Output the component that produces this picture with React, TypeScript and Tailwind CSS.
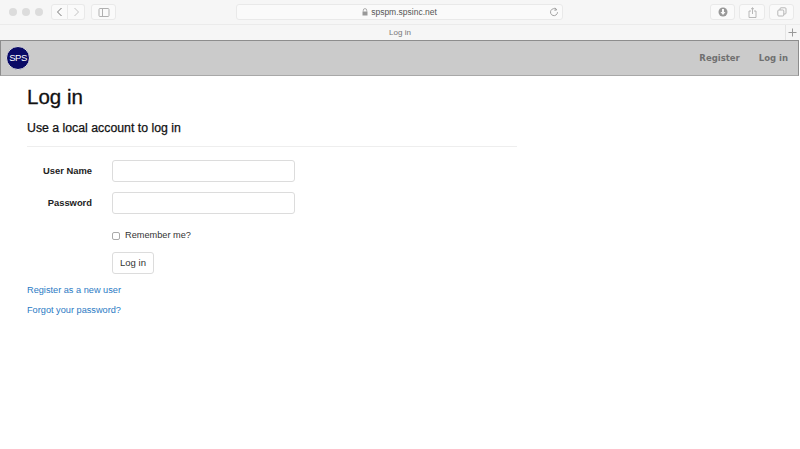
import React from "react";

const Btn = ({ className = "", children }: { className?: string; children?: React.ReactNode }) => (
  <div className={"h-[16px] border border-[#e9e9e9] rounded-[3px] bg-[#fafafa] flex items-center justify-center " + className}>{children}</div>
);

export default function App() {
  return (
    <div className="w-[800px] h-[449px] bg-white overflow-hidden flex flex-col font-['Liberation_Sans',Arial,sans-serif]">
      {/* Browser toolbar */}
      <div className="h-[25px] bg-[#f6f6f6] border-b border-[#ebebeb] flex items-center pl-[9px] pr-[6px] shrink-0">
        <div className="flex gap-[5px] w-[42px]">
          <span className="w-[8px] h-[8px] rounded-full bg-[#dcdcdc]" />
          <span className="w-[8px] h-[8px] rounded-full bg-[#dcdcdc]" />
          <span className="w-[8px] h-[8px] rounded-full bg-[#dcdcdc]" />
        </div>
        <div className="flex">
          <Btn className="w-[17px] rounded-r-none">
            <svg width="7" height="10" viewBox="0 0 7 10" fill="none" stroke="#777" strokeWidth="1"><path d="M5.500 1 1.500 5l4 4" /></svg>
          </Btn>
          <Btn className="w-[17px] rounded-l-none border-l-0">
            <svg width="7" height="10" viewBox="0 0 7 10" fill="none" stroke="#c4c4c4" strokeWidth="1"><path d="M1.500 1l4 4-4 4" /></svg>
          </Btn>
        </div>
        <Btn className="w-[25px] ml-[6px]">
          <svg width="12" height="9" viewBox="0 0 12 9" fill="none" stroke="#b0b0b0" strokeWidth="1"><rect x="1" y="0.5" width="10" height="8" rx="1" /><path d="M4.500 .5v8" /></svg>
        </Btn>
        <div className="w-[327px] h-[16px] ml-[120px] border border-[#e9e9e9] rounded-[3px] bg-[#fafafa] flex items-center relative">
          <div className="flex-1 flex items-center justify-center gap-[3px] text-[8.500px] text-[#555]">
            <svg width="6" height="8" viewBox="0 0 6 8"><path d="M1.300 3.500V2.300a1.700 1.700 0 0 1 3.400 0v1.200" fill="none" stroke="#999" strokeWidth=".8" /><rect x=".5" y="3.500" width="5" height="4" fill="#999" /></svg>
            <span>spspm.spsinc.net</span>
          </div>
          <svg className="absolute right-[3px] top-[2px]" width="10" height="10" viewBox="0 0 10 10" fill="none" stroke="#999" strokeWidth=".9"><path d="M7.600 2.800a3.500 3.500 0 1 0 .9 2.400" /><path d="M6 .8l1.700 2-2.200.6" /></svg>
        </div>
        <div className="flex-1" />
        <div className="flex gap-[4px]">
          <Btn className="w-[25px]">
            <svg width="10" height="10" viewBox="0 0 10 10"><circle cx="5" cy="5" r="4.500" fill="#999" /><path d="M4 2h2v3h1.500L5 8 2.500 5H4z" fill="#fafafa" /></svg>
          </Btn>
          <Btn className="w-[26px]">
            <svg width="9" height="11" viewBox="0 0 9 11" fill="none" stroke="#b0b0b0" strokeWidth=".9"><path d="M3 4H1v6.500h7V4H6" /><path d="M4.500 7V.8M3 2.200 4.500.8 6 2.200" /></svg>
          </Btn>
          <Btn className="w-[25px]">
            <svg width="10" height="10" viewBox="0 0 10 10" fill="none" stroke="#b0b0b0" strokeWidth=".9"><rect x=".8" y="3" width="6" height="6" rx="1" /><path d="M3 3V1.800a1 1 0 0 1 1-1h4a1 1 0 0 1 1 1V6a1 1 0 0 1-1 1H6.800" /></svg>
          </Btn>
        </div>
      </div>
      {/* Tab bar */}
      <div className="h-[15px] bg-[#f6f6f6] flex items-center shrink-0 relative">
        <div className="flex-1 text-center text-[8px] text-[#777]">Log in</div>
        <div className="absolute right-[1px] top-0 w-[14px] h-full border-l border-[#e4e4e4] flex items-center justify-center">
          <svg width="9" height="9" viewBox="0 0 9 9" stroke="#999" strokeWidth="1"><path d="M4.500 .5v8M.5 4.500h8" /></svg>
        </div>
      </div>
      {/* Navbar */}
      <div className="h-[36px] bg-[#cbcbcb] border border-[#8d8d8d] border-b-[#a8a8a8] flex items-center pl-[5px] pr-[10px] shrink-0 w-[799px]">
        <div className="w-[24px] h-[24px] rounded-full bg-[#0a0a66] border border-[#e0e0e0] text-white text-[9.500px] tracking-[-0.5px] flex items-center justify-center">SPS</div>
        <div className="flex-1" />
        <span className="text-[8.500px] font-bold text-[#707070] font-['DejaVu_Sans',sans-serif]">Register</span>
        <span className="text-[8.500px] font-bold text-[#707070] font-['DejaVu_Sans',sans-serif] ml-[19px]">Log in</span>
      </div>
      {/* Main */}
      <div className="pl-[27px] w-[517px] text-[#111]">
        <h1 className="text-[20.500px] leading-[24px] mt-[9px] [-webkit-text-stroke:0.3px_#111]">Log in</h1>
        <h2 className="text-[12.300px] leading-[14px] mt-[12px] [-webkit-text-stroke:0.25px_#111]">Use a local account to log in</h2>
        <hr className="mt-[11px] border-[#eeeeee]" />
        <div className="mt-[13px] flex items-center h-[22px]">
          <label className="w-[65px] text-right text-[9.400px] font-bold text-[#222] pt-px">User Name</label>
          <input className="ml-[20px] w-[183px] h-[22px] border border-[#dcdcdc] rounded-[3px] bg-white" />
        </div>
        <div className="mt-[10px] flex items-center h-[22px]">
          <label className="w-[65px] text-right text-[9.400px] font-bold text-[#222] pt-px">Password</label>
          <input type="password" className="ml-[20px] w-[183px] h-[22px] border border-[#dcdcdc] rounded-[3px] bg-white" />
        </div>
        <div className="mt-[16px] ml-[85px] flex items-center h-[12px]">
          <span className="w-[8px] h-[8px] border border-[#aaa] rounded-[2px] bg-white" />
          <span className="ml-[5px] text-[9.200px] text-[#333]">Remember me?</span>
        </div>
        <button className="block ml-[85px] mt-[10px] w-[42px] h-[22px] border border-[#dcdcdc] rounded-[3px] bg-white text-[9.500px] text-[#333]">Log in</button>
        <a className="block mt-[10px] text-[9.200px] leading-[12px] text-[#2a7ac4]">Register as a new user</a>
        <a className="block mt-[8px] text-[9.200px] leading-[12px] text-[#2a7ac4]">Forgot your password?</a>
      </div>
    </div>
  );
}
